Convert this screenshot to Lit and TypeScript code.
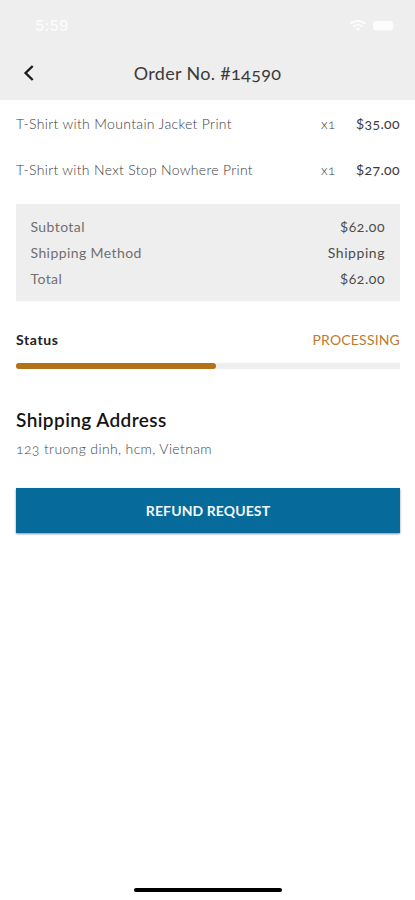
import { LitElement, html, css } from "lit";
import { customElement } from "lit/decorators.js";

interface Item { name: string; qty: number; price: string; }

/** Keeps "$" and "#" at full height next to old-style figures. */
const figures = (text: string) =>
  text.split(/([$#])/).map((part) => (part === "$" || part === "#" ? html`<span class="sign">${part}</span>` : part));

@customElement("app-root")
export class AppRoot extends LitElement {
  static styles = css`
    :host {
      display: flex; flex-direction: column; height: 900px; box-sizing: border-box;
      background: #fff; overflow: hidden;
      font: 14px/26px Lato, "Noto Sans", sans-serif;
      font-variant-numeric: oldstyle-nums;
    }
    .sign { font-variant-numeric: normal; }
    header { background: #eee; height: 100px; flex: none; }
    .status-bar {
      height: 51px; display: flex; align-items: center; justify-content: space-between;
      padding: 0 20px 0 35px; color: #fcfcfc;
    }
    .time { font: 500 15px/20px Inter, sans-serif; letter-spacing: 0.3px; font-variant-numeric: lining-nums; }
    .indicators { display: flex; gap: 5px; align-items: center; }
    .indicators svg { display: block; }
    .nav { height: 44px; display: grid; grid-template-columns: 60px 1fr 60px; align-items: center; }
    .back { display: block; margin-left: 22px; }
    .title { text-align: center; font-size: 18px; letter-spacing: 0.33px; color: #3a3a3c; }
    main { padding: 0 15px 0 16px; display: flex; flex-direction: column; }
    .item { height: 46px; display: flex; align-items: center; padding-top: 1px; box-sizing: border-box; }
    .item + .item { padding-top: 2px; }
    .name { flex: 1; font-weight: 300; letter-spacing: 0.33px; color: #3c3c3c; }
    .item + .item .name { letter-spacing: 0.31px; }
    .qty { width: 35px; font-weight: 300; color: #3c3c3c; }
    .price { letter-spacing: 0.38px; color: #3a3a3a; }
    .summary { background: #eee; margin-top: 11.5px; height: 97.5px; box-sizing: border-box; padding: 10.5px 15px 9px 14.5px; }
    .row { display: flex; justify-content: space-between; }
    .label { letter-spacing: 0.41px; color: #707070; }
    .value { letter-spacing: 0.55px; color: #4c4c4c; }
    .state-row { margin-top: 26px; }
    .state { font-weight: 700; letter-spacing: 0.62px; color: #222; }
    .processing { letter-spacing: 0.17px; color: #c07a2c; }
    .track { height: 6px; background: #eee; margin-top: 10px; }
    .fill { height: 6px; border-radius: 3px; background: #b37217; }
    h2 { margin: 38px 0 0; font-size: 19px; line-height: 26px; font-weight: 600; letter-spacing: 0.42px; color: #151515; }
    .address { margin-top: 3px; font-weight: 300; letter-spacing: 0.36px; color: #444; }
    .refund {
      margin-top: 26px; height: 45px; border: 0; padding: 0; background: #066b9b; color: #f2f8fb;
      font: 700 14px/45px Lato, sans-serif; letter-spacing: 0.1px;
      box-shadow: 0 0.5px 2px rgba(0, 0, 0, 0.45);
    }
    .home { width: 148px; height: 4px; border-radius: 2px; background: #000; margin: auto auto 8px; flex: none; }
  `;

  private items: Item[] = [
    { name: "T-Shirt with Mountain Jacket Print", qty: 1, price: "$35.00" },
    { name: "T-Shirt with Next Stop Nowhere Print", qty: 1, price: "$27.00" },
  ];
  private totals = [["Subtotal", "$62.00"], ["Shipping Method", "Shipping"], ["Total", "$62.00"]];
  private progress = 52;

  render() {
    return html`
      <header>
        <div class="status-bar">
          <span class="time">5:59</span>
          <span class="indicators">
            <svg width="18" height="13" viewBox="0 0 18 13" fill="none" stroke="currentColor" stroke-width="1.9">
              <path d="M1.5 4.8C5.6 1 12.4 1 16.5 4.8M4.4 7.6C7 5.3 11 5.3 13.6 7.6" />
              <path d="M9 12L6.8 9.7Q9 8 11.2 9.7Z" fill="currentColor" stroke="none" />
            </svg>
            <svg width="23" height="10" viewBox="0 0 23 10" fill="currentColor">
              <rect x="1" width="20" height="9.5" rx="3" />
              <rect x="21.5" y="3" width="1" height="4" rx=".5" opacity=".5" />
            </svg>
          </span>
        </div>
        <div class="nav">
          <svg class="back" width="14" height="18" viewBox="0 0 14 18" fill="none" stroke="#1c1c1c" stroke-width="2.4">
            <path d="M10.7 2L3.6 9L10.7 16" />
          </svg>
          <span class="title">${figures("Order No. #14590")}</span>
        </div>
      </header>
      <main>
        <section>
          ${this.items.map((i) => html`<div class="item">
            <span class="name">${i.name}</span><span class="qty">x${i.qty}</span><span class="price">${figures(i.price)}</span>
          </div>`)}
        </section>
        <section class="summary">
          ${this.totals.map(([l, v]) => html`<div class="row"><span class="label">${l}</span><span class="value">${figures(v)}</span></div>`)}
        </section>
        <div class="row state-row"><span class="state">Status</span><span class="processing">PROCESSING</span></div>
        <div class="track"><div class="fill" style="width:${this.progress}%"></div></div>
        <h2>Shipping Address</h2>
        <div class="address">123 truong dinh, hcm, Vietnam</div>
        <button class="refund">REFUND REQUEST</button>
      </main>
      <div class="home"></div>
    `;
  }
}
